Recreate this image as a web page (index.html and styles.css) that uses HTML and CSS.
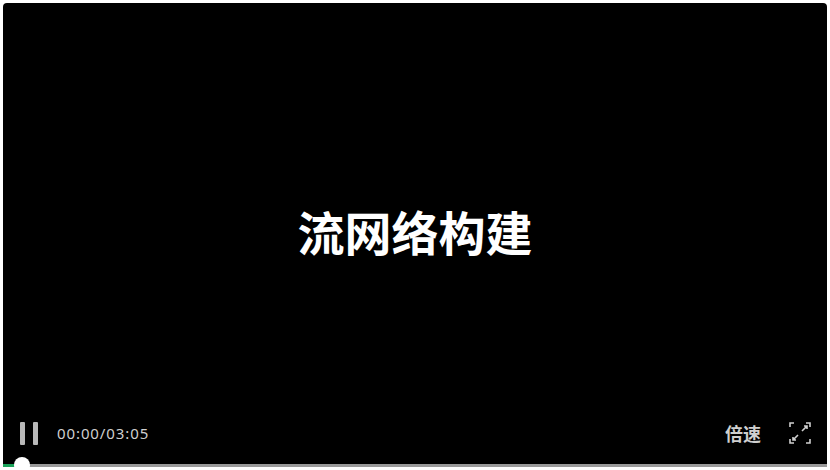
FILE: index.html
```html
<!DOCTYPE html>
<html lang="zh">
<head>
<meta charset="utf-8">
<link rel="stylesheet" href="styles.css">
</head>
<body>
<div class="player">
  <div class="screen">
    <div class="title">流网络构建</div>
  </div>
  <div class="controls">
    <div class="left">
      <div class="pause"><span></span><span></span></div>
      <div class="time">00:00/03:05</div>
    </div>
    <div class="right">
      <div class="speed">倍速</div>
      <svg class="fs" width="22" height="22" viewBox="0 0 22 22" fill="none" stroke="#cfcfcf" stroke-width="1.6">
        <path d="M1 5V1h4M17 1h4v4M21 17v4h-4M5 21H1v-4"/>
        <path d="M13 9l5-5M15 4h3v3"/>
        <path d="M9 13l-5 5M4 15v3h3"/>
      </svg>
    </div>
  </div>
  <div class="progress">
    <div class="played"></div>
    <div class="knob"></div>
  </div>
</div>
</body>
</html>
```
FILE: styles.css
```css
html, body {
  margin: 0;
  padding: 0;
  background: #fff;
}
body {
  padding: 3px 3px 0 3px;
  font-family: "Microsoft YaHei", "Noto Sans CJK SC", sans-serif;
}
.player {
  position: relative;
  width: 824px;
  height: 464px;
  background: #000;
  border-radius: 4px 4px 0 0;
  display: flex;
  flex-direction: column;
}
.screen {
  flex: 1;
  display: flex;
  align-items: center;
  justify-content: center;
  padding-bottom: 10px;
}
.title {
  color: #fff;
  font-size: 47px;
  font-weight: 700;
  line-height: 1;
}
.controls {
  position: absolute;
  left: 0;
  right: 0;
  bottom: 15px;
  height: 38px;
  display: flex;
  justify-content: space-between;
  align-items: center;
  padding: 0 16px 0 17px;
}
.left, .right {
  display: flex;
  align-items: center;
}
.pause {
  display: flex;
  gap: 8px;
  width: 18px;
  height: 23px;
  margin-right: 19px;
}
.pause span {
  width: 5px;
  height: 23px;
  background: #b8b8b8;
  border-radius: 1px;
}
.time {
  font-family: "Noto Sans", "Open Sans", sans-serif;
  color: #cfcfcf;
  font-size: 15px;
  letter-spacing: 0.9px;
}
.speed {
  color: #cfcfcf;
  font-size: 18px;
  font-weight: 700;
  margin-right: 28px;
}
.fs {
  display: block;
}
.progress {
  position: absolute;
  left: 0;
  right: 0;
  bottom: 0;
  height: 3px;
  background: #9a9a9a;
}
.played {
  position: absolute;
  left: 0;
  top: 0;
  bottom: 0;
  width: 14px;
  background: #1aa35a;
}
.knob {
  position: absolute;
  left: 11px;
  top: -7px;
  width: 16px;
  height: 16px;
  border-radius: 50%;
  background: #fff;
}
```
